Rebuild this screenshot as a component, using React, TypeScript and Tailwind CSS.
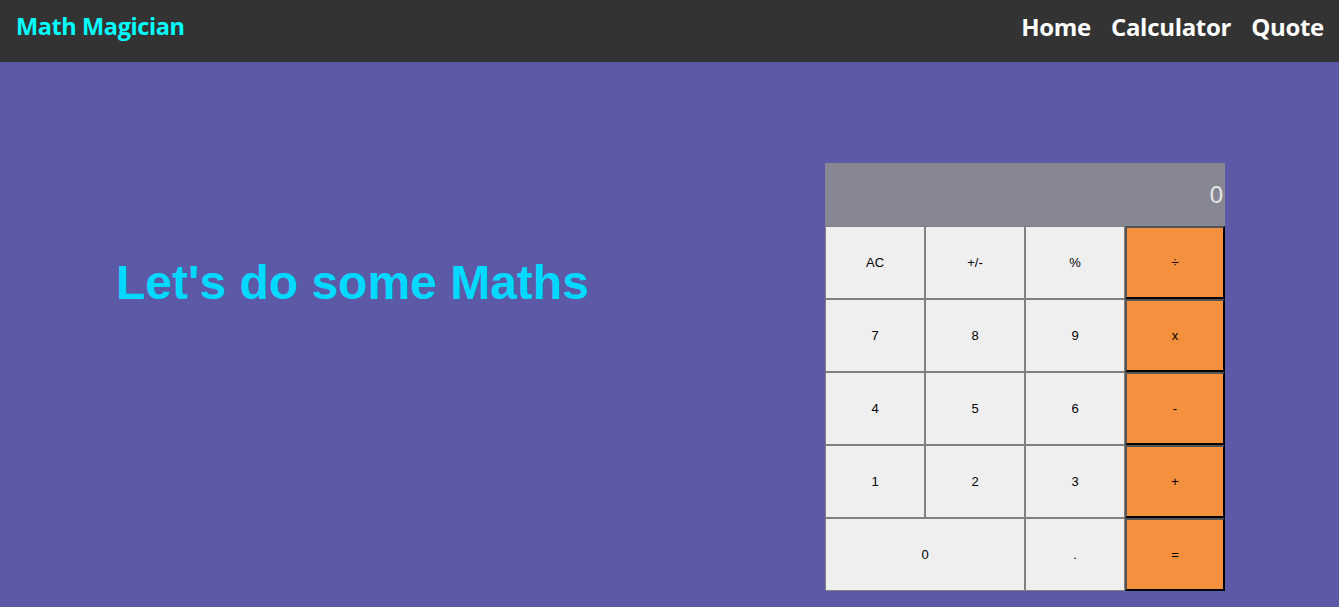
import React from 'react';

const keys: { label: string; op?: boolean; wide?: boolean }[] = [
  { label: 'AC' },
  { label: '+/-' },
  { label: '%' },
  { label: '÷', op: true },
  { label: '7' },
  { label: '8' },
  { label: '9' },
  { label: 'x', op: true },
  { label: '4' },
  { label: '5' },
  { label: '6' },
  { label: '-', op: true },
  { label: '1' },
  { label: '2' },
  { label: '3' },
  { label: '+', op: true },
  { label: '0', wide: true },
  { label: '.' },
  { label: '=', op: true },
];

const Calculator: React.FC = () => {
  return (
    <div className="w-[400px] font-['Liberation_Sans',Arial,sans-serif]">
      <div className="h-[63px] bg-[#868793] flex items-center justify-end pr-[2px] text-[24px] text-[#e6e6e6]">
        0
      </div>
      <div className="grid grid-cols-4 auto-rows-[73px]">
        {keys.map((k) => (
          <button
            key={k.label}
            className={
              k.op
                ? 'bg-[#f5913e] border-2 border-l-[#555] border-t-[#555] border-r-black border-b-black text-[13px] text-black'
                : k.wide
                ? 'col-span-2 bg-[#efefef] border border-[#808080] text-[13px] text-black'
                : 'bg-[#efefef] border border-[#808080] text-[13px] text-black'
            }
          >
            {k.label}
          </button>
        ))}
      </div>
    </div>
  );
};

const App: React.FC = () => {
  return (
    <div className="min-h-[607px] bg-[#5c5aa6]">
      <header className="h-[62px] bg-[#333333] flex items-center justify-between pl-4 pr-[15px] pb-2 font-['Open_Sans',sans-serif] font-bold">
        <h1 className="text-[23.5px] text-[#00ffff] tracking-[-0.4px]">Math Magician</h1>
        <nav className="flex gap-5 text-[24px] text-white tracking-[-0.3px]">
          <a href="#">Home</a>
          <a href="#">Calculator</a>
          <a href="#">Quote</a>
        </nav>
      </header>
      <main className="flex justify-between pl-[116px] pr-[114px] pt-[101px]">
        <h2 className="mt-[96px] text-5xl leading-none font-bold text-[#00d9ff] font-['Liberation_Sans',Arial,sans-serif]">
          Let's do some Maths
        </h2>
        <Calculator />
      </main>
    </div>
  );
};

export default App;
